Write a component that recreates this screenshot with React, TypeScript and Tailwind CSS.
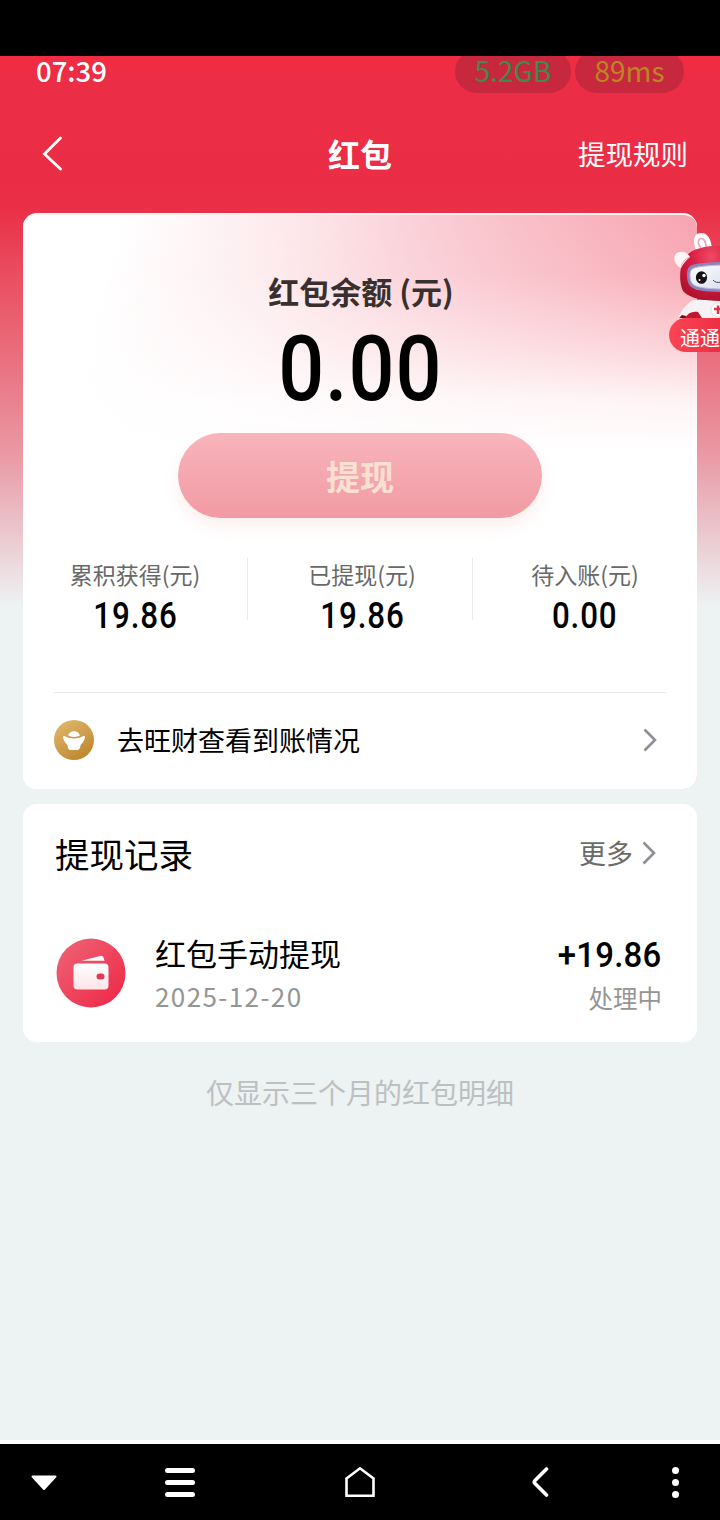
import type { ReactNode } from "react";
import clsx from "clsx";

const stats = [
  { label: "累积获得(元)", value: "19.86", className: "w-[224px]" },
  { label: "已提现(元)", value: "19.86", className: "w-[225px] border-l border-[#ebebeb] pl-[4px]" },
  { label: "待入账(元)", value: "0.00", className: "w-[225px] border-l border-[#ebebeb]" },
];

const records = [
  { title: "红包手动提现", date: "2025-12-20", amount: "+19.86", status: "处理中" },
];

function Figure({ children, className }: { children: ReactNode; className?: string }) {
  return (
    <span className={clsx("inline-block font-['Roboto',sans-serif] font-medium text-black", className)}>
      {children}
    </span>
  );
}

function ChevronRight() {
  return (
    <svg viewBox="0 0 14 24" className="h-6 w-3.5" fill="none" stroke="#8e8f96" strokeWidth="2.6">
      <path d="M1.5 1.5 L12 12 L1.5 22.5" />
    </svg>
  );
}

function IngotIcon() {
  return (
    <svg viewBox="0 0 40 40" className="h-10 w-10">
      <defs>
        <linearGradient id="gold" x1="0.2" y1="0" x2="0.8" y2="1">
          <stop offset="0" stopColor="#dfb76a" />
          <stop offset="1" stopColor="#bd842c" />
        </linearGradient>
      </defs>
      <circle cx="20" cy="20" r="20" fill="url(#gold)" />
      <path d="M14 16 C15 9.500 25 9.500 26 16 C23 18 17 18 14 16 Z" fill="#fff" />
      <path d="M9 17 C9 16 10 15.800 11 16.300 C17 19.200 23 19.200 29 16.300 C30 15.800 31.200 16 31 17.200 C30.500 21 28 23.500 26.500 25 C26.200 29 25 30 23 30 H17 C15 30 13.800 29 13.500 25 C12 23.500 9.500 21 9 17 Z" fill="#fff" />
      <path d="M13 15.800 C17 18.200 23 18.200 27 15.800" fill="none" stroke="#cf9a55" strokeWidth="1.300" />
    </svg>
  );
}

function WalletIcon() {
  return (
    <svg viewBox="0 0 70 70" className="h-[70px] w-[70px]">
      <defs>
        <linearGradient id="walletBg" x1="0.1" y1="0.1" x2="0.9" y2="0.9">
          <stop offset="0" stopColor="#ef5f72" />
          <stop offset="1" stopColor="#ee2b49" />
        </linearGradient>
        <linearGradient id="walletBody" x1="0" y1="0" x2="0" y2="1">
          <stop offset="0" stopColor="#fff" />
          <stop offset="1" stopColor="#fde3e6" />
        </linearGradient>
      </defs>
      <circle cx="35" cy="35" r="34.500" fill="url(#walletBg)" />
      <path d="M25.500 22.800 L44 17.900 Q46.500 17.300 47.500 19.500 L48.500 22.800 Z" fill="#fff" />
      <rect x="17.500" y="25.500" width="35" height="26" rx="4" fill="url(#walletBody)" />
      <rect x="40.500" y="35.500" width="8" height="6" rx="3" fill="#e23b53" />
    </svg>
  );
}

/* Robot helper that peeks in from the right edge */
function Mascot() {
  return (
    <svg viewBox="0 0 48 88" className="ml-auto block h-[88px] w-12">
      <defs>
        <radialGradient id="helmet" cx="0.65" cy="0.2" r="0.8">
          <stop offset="0" stopColor="#ee4a66" />
          <stop offset="0.5" stopColor="#da1f42" />
          <stop offset="1" stopColor="#b0122f" />
        </radialGradient>
        <linearGradient id="visor" x1="0" y1="0" x2="1" y2="1">
          <stop offset="0" stopColor="#fff" />
          <stop offset="1" stopColor="#d9dcef" />
        </linearGradient>
      </defs>
      {/* body */}
      <path d="M6 88 C10 80 14 74 21 70 H48 V88 Z" fill="#f6f1f4" />
      <path d="M7 88 L10 85 L14 86 L14 88 Z" fill="#6d1020" />
      <path d="M13 88 C16 83 20 81 26 82 L30 88 Z" fill="#c0162f" />
      <circle cx="46" cy="80" r="7" fill="#fff" stroke="#ecdbe2" strokeWidth="1" />
      <path d="M42 79 H50 M46 75.500 V84" stroke="#e0304a" strokeWidth="2.400" />
      {/* ears and helmet */}
      <path d="M24 20 C20 10 22 3 29 3 C36 3 39 9 40 19 Z" fill="#fff" />
      <path d="M29 18 C24 12 27 7 31 9 C34 11 34 14 34 18" fill="none" stroke="#eda4bb" strokeWidth="1.600" />
      <path d="M56 16 C36 15 18 18 12 29 C7 38 7 53 11 61 C19 70 36 71 56 71 Z" fill="url(#helmet)" />
      <path d="M18 27 C15 21 6 20 3 25 C1 30 4 36 9 38 C11 34 14 30 18 27 Z" fill="#fff5f7" />
      <path d="M17 27 C13 29 10 33 9 37" fill="none" stroke="#f3bccb" strokeWidth="1.200" />
      {/* face */}
      <path d="M56 32 C42 32 31 33 24 34 C17 35 15 38 15 45 C15 54 18 58 26 60 C36 62 46 62 56 62 Z" fill="#8e83bd" />
      <path d="M56 35 C42 35 33 36 26 37 C20 38 18 40 18 45 C18 52 20 55.500 27 57 C36 59 46 59 56 59 Z" fill="url(#visor)" stroke="#b9b9df" strokeWidth="1" />
      <ellipse cx="29.500" cy="47.500" rx="5.600" ry="6.300" fill="#161116" />
      <circle cx="32" cy="45.500" r="1.700" fill="#fff" />
      <circle cx="27.500" cy="50" r="1" fill="#fff" />
      <path d="M41 50 C43 52.500 46 53 49 52" fill="none" stroke="#4b4553" strokeWidth="1" />
    </svg>
  );
}

function NavBar() {
  return (
    <nav className="flex h-[76px] items-center bg-black text-white">
      <div className="flex w-[90px] justify-center pr-0.5">
        <svg viewBox="0 0 28 18" className="mt-0.5 h-[18px] w-7">
          <path d="M2.500 2.500 H25.500 L14 15 Z" fill="currentColor" stroke="currentColor" strokeWidth="2" strokeLinejoin="round" />
        </svg>
      </div>
      <div className="flex w-[180px] justify-center">
        <div className="flex w-[30px] flex-col gap-[7px]">
          <span className="h-[5px] rounded-full bg-white" />
          <span className="h-[5px] rounded-full bg-white" />
          <span className="h-[5px] rounded-full bg-white" />
        </div>
      </div>
      <div className="flex w-[180px] justify-center">
        <svg viewBox="0 0 32 32" className="h-8 w-8" fill="none" stroke="currentColor" strokeWidth="2.6">
          <path d="M2.500 12.500 L16 2.300 L29.500 12.500 V29.700 H2.500 Z" />
        </svg>
      </div>
      <div className="flex w-[180px] justify-center">
        <svg viewBox="0 0 18 32" className="h-8 w-[18px]" fill="none" stroke="currentColor" strokeWidth="3.6" strokeLinecap="round" strokeLinejoin="round">
          <path d="M15.500 3 L4 14.500 Q2.500 16 4 17.500 L15.500 29" />
        </svg>
      </div>
      <div className="flex w-[90px] flex-col items-center gap-[5px]">
        <span className="h-[7px] w-[7px] rounded-full bg-white" />
        <span className="h-[7px] w-[7px] rounded-full bg-white" />
        <span className="h-[7px] w-[7px] rounded-full bg-white" />
      </div>
    </nav>
  );
}

export default function App() {
  return (
    <div
      lang="zh-CN"
      className="relative flex h-[1520px] w-[720px] flex-col overflow-hidden bg-[#edf2f3] font-['Noto_Sans_CJK_SC',sans-serif]"
    >
      <div className="relative z-10 h-14 shrink-0 bg-black" />

      <main className="flex flex-1 flex-col bg-[linear-gradient(180deg,#f22c42_0px,#ec2d46_24px,#ea2e45_150px,#e94e60_220px,#e97382_310px,#e99aa5_400px,#ebccd2_485px,#edf2f3_550px)]">
        {/* Status bar, the pills slide under the black strip */}
        <div className="flex h-[37px] items-end justify-between px-9">
          <span className="mb-[10px] text-[27.5px] leading-[26px] font-medium text-white">07:39</span>
          <div className="flex gap-1 text-[28px] leading-[26px]">
            <span className="flex h-[43px] w-[116px] items-center justify-center rounded-full bg-[#c8283e] pb-[3px] text-[#45864a]">5.2GB</span>
            <span className="flex h-[43px] w-[109px] items-center justify-center rounded-full bg-[#c8283e] pb-[3px] text-[#b98620]">89ms</span>
          </div>
        </div>

        {/* Page header */}
        <header className="grid h-[120px] grid-cols-3 items-center pr-8 pl-10 text-white">
          <svg viewBox="0 0 24 36" className="h-9 w-6" fill="none" stroke="currentColor" strokeWidth="2.8" strokeLinecap="round">
            <path d="M20.500 3 L4.500 19 L20.500 34" />
          </svg>
          <h1 className="-ml-2 text-center text-[32px] leading-10 font-bold">红包</h1>
          <a href="#rules" className="text-right text-[27.5px] leading-10">提现规则</a>
        </header>

        {/* Balance card */}
        <section className="mx-[23px] flex h-[576px] shrink-0 flex-col rounded-[14px] border-t-2 border-[#fff5f5] bg-white bg-[linear-gradient(180deg,rgba(255,255,255,0)_0px,rgba(255,255,255,0.12)_60px,rgba(255,255,255,0.55)_135px,rgba(255,255,255,0.88)_185px,#fff_235px),linear-gradient(105deg,#fff_12%,#fde9ec_32%,#facdd4_50%,#f79eab_86%)]">
          <div className="flex flex-col items-center pt-[55px]">
            <h2 className="pl-0.5 text-[31px] leading-[42px] font-bold text-[#37302f]">红包余额 (元)</h2>
            <Figure className="mt-[12px] scale-x-[0.89] text-[91px] leading-[90px] tracking-[1px]">0.00</Figure>
            <button className="mt-[19px] h-[85px] w-[364px] rounded-full bg-gradient-to-b from-[#f8b4bc] to-[#f19aa3] text-[34px] font-bold text-[#fae0d0] shadow-[0_8px_16px_rgba(240,120,110,0.12)]">
              提现
            </button>
          </div>

          <div className="mt-10 flex h-[62px]">
            {stats.map((item) => (
              <div key={item.label} className={clsx("flex flex-col items-center", item.className)}>
                <span className="text-[23px] leading-8 text-[#686868]">{item.label}</span>
                <Figure className="mt-[6px] scale-x-[0.87] text-[36px] leading-10 tracking-[1px]">{item.value}</Figure>
              </div>
            ))}
          </div>

          <a href="#wangcai" className="mx-[31px] mt-[72px] flex h-[95px] items-center border-t border-[#e9e9e9] pr-[9px]">
            <IngotIcon />
            <span className="ml-[23px] flex-1 text-[27px] leading-10 text-black">去旺财查看到账情况</span>
            <ChevronRight />
          </a>
        </section>

        {/* Withdrawal records */}
        <section className="mx-[23px] mt-[15px] h-[238px] shrink-0 rounded-[14px] bg-white px-8">
          <div className="flex h-[98px] items-center justify-between pr-[9px]">
            <h2 className="text-[34.5px] leading-[50px] text-black">提现记录</h2>
            <a href="#more" className="flex items-center gap-[9px] text-[27px] leading-10 text-[#6b6b6b]">
              更多
              <ChevronRight />
            </a>
          </div>
          {records.map((record) => (
            <div key={record.date} className="mt-[26px] flex h-[90px] items-center pr-[3px] pl-px">
              <WalletIcon />
              <div className="ml-[29px] flex flex-1 flex-col">
                <span className="text-[31px] leading-[46px] text-black">{record.title}</span>
                <span className="text-[26px] leading-10 tracking-[1.4px] text-[#959595]">{record.date}</span>
              </div>
              <div className="flex flex-col items-end pt-0.5">
                <Figure className="origin-right scale-x-[0.94] text-[35px] leading-[47px] tracking-[0.3px]">{record.amount}</Figure>
                <span className="text-[24.5px] leading-[38px] text-[#959595]">{record.status}</span>
              </div>
            </div>
          ))}
        </section>

        <p className="mt-[30px] text-center text-[28px] leading-10 text-[#bcc0c1]">仅显示三个月的红包明细</p>
      </main>

      <div className="h-1 shrink-0 bg-white" />
      <NavBar />

      {/* Floating assistant */}
      <div className="absolute top-[230px] right-0 w-[51px]">
        <Mascot />
        <div className="h-[34px] overflow-hidden rounded-l-full bg-gradient-to-r from-[#fb4553] to-[#ec2f42] pl-[11px] text-[20px] leading-[40px] whitespace-nowrap text-white">
          通通
        </div>
      </div>
    </div>
  );
}
